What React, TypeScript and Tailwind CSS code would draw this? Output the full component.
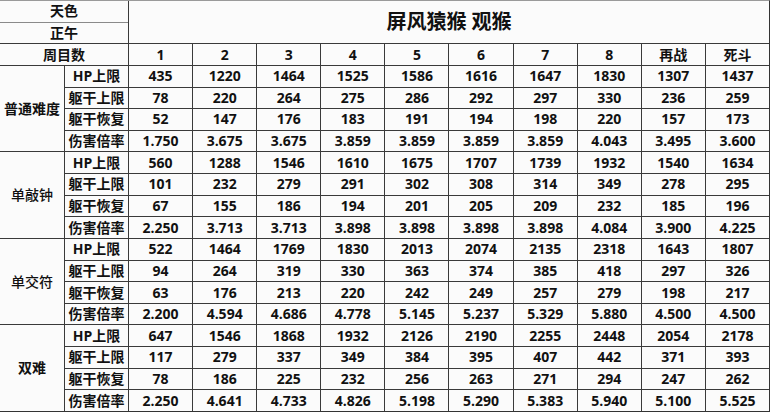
import React from "react";

const cols = ["1", "2", "3", "4", "5", "6", "7", "8", "再战", "死斗"];
const labels = ["HP上限", "躯干上限", "躯干恢复", "伤害倍率"];

const groups: { name: string; bold: boolean; rows: string[][] }[] = [
  {
    name: "普通难度",
    bold: true,
    rows: [
      ["435", "1220", "1464", "1525", "1586", "1616", "1647", "1830", "1307", "1437"],
      ["78", "220", "264", "275", "286", "292", "297", "330", "236", "259"],
      ["52", "147", "176", "183", "191", "194", "198", "220", "157", "173"],
      ["1.750", "3.675", "3.675", "3.859", "3.859", "3.859", "3.859", "4.043", "3.495", "3.600"],
    ],
  },
  {
    name: "单敲钟",
    bold: false,
    rows: [
      ["560", "1288", "1546", "1610", "1675", "1707", "1739", "1932", "1540", "1634"],
      ["101", "232", "279", "291", "302", "308", "314", "349", "278", "295"],
      ["67", "155", "186", "194", "201", "205", "209", "232", "185", "196"],
      ["2.250", "3.713", "3.713", "3.898", "3.898", "3.898", "3.898", "4.084", "3.900", "4.225"],
    ],
  },
  {
    name: "单交符",
    bold: false,
    rows: [
      ["522", "1464", "1769", "1830", "2013", "2074", "2135", "2318", "1643", "1807"],
      ["94", "264", "319", "330", "363", "374", "385", "418", "297", "326"],
      ["63", "176", "213", "220", "242", "249", "257", "279", "198", "217"],
      ["2.200", "4.594", "4.686", "4.778", "5.145", "5.237", "5.329", "5.880", "4.500", "4.500"],
    ],
  },
  {
    name: "双难",
    bold: true,
    rows: [
      ["647", "1546", "1868", "1932", "2126", "2190", "2255", "2448", "2054", "2178"],
      ["117", "279", "337", "349", "384", "395", "407", "442", "371", "393"],
      ["78", "186", "225", "232", "256", "263", "271", "294", "247", "262"],
      ["2.250", "4.641", "4.733", "4.826", "5.198", "5.290", "5.383", "5.940", "5.100", "5.525"],
    ],
  },
];

const cell = "bg-[#fbfbfb] flex items-center justify-center leading-none";

export default function App() {
  return (
    <div
      className="w-[770px] h-[412px] bg-[#fbfbfb] text-[#111] text-[14px] font-bold"
      style={{ fontFamily: '"Open Sans", "Noto Sans CJK SC", sans-serif' }}
    >
      <div className="w-[770px] h-[412px] grid grid-cols-[64px_63px_repeat(10,minmax(0,1fr))] grid-rows-[repeat(19,minmax(0,1fr))] gap-px bg-[#3a3a3a] border-t border-t-[#9a9a9a] border-r border-r-[#333] border-b border-b-[#333]">
        <div className={`${cell} col-span-2 border-b border-b-[#8a8a8a] -mb-px`}>天色</div>
        <div className={`${cell} col-start-3 col-span-10 row-span-2 text-[20px]`}>屏风猿猴 观猴</div>
        <div className={`${cell} col-span-2 col-start-1`}>正午</div>
        <div className={`${cell} col-span-2`}>周目数</div>
        {cols.map((c) => (
          <div key={c} className={cell}>
            {c}
          </div>
        ))}
        {groups.map((g) => (
          <React.Fragment key={g.name}>
            <div className={`${cell} row-span-4 ${g.bold ? "font-bold" : "font-medium"}`}>{g.name}</div>
            {g.rows.map((r, i) => (
              <React.Fragment key={i}>
                <div className={cell}>{labels[i]}</div>
                {r.map((v, j) => (
                  <div key={j} className={cell}>
                    {v}
                  </div>
                ))}
              </React.Fragment>
            ))}
          </React.Fragment>
        ))}
      </div>
    </div>
  );
}
